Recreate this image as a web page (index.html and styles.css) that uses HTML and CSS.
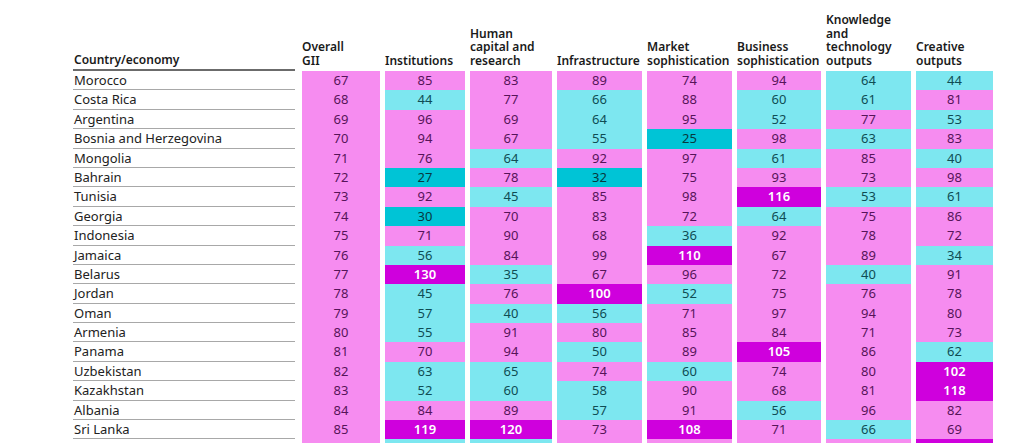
FILE: index.html
```html
<!DOCTYPE html>
<html lang="en">
<head>
<meta charset="utf-8">
<title>GII rankings by pillar</title>
<link rel="stylesheet" href="styles.css">
</head>
<body>
<div class="gii-table">
  <div class="head head-country">Country/economy</div>
  <div class="head">Overall<br>GII</div>
  <div class="head">Institutions</div>
  <div class="head">Human<br>capital and<br>research</div>
  <div class="head">Infrastructure</div>
  <div class="head">Market<br>sophistication</div>
  <div class="head">Business<br>sophistication</div>
  <div class="head">Knowledge<br>and<br>technology<br>outputs</div>
  <div class="head">Creative<br>outputs</div>

  <div class="country">Morocco</div>
  <div class="cell q3">67</div><div class="cell q3">85</div><div class="cell q3">83</div><div class="cell q3">89</div><div class="cell q3">74</div><div class="cell q3">94</div><div class="cell q2">64</div><div class="cell q2">44</div>

  <div class="country">Costa Rica</div>
  <div class="cell q3">68</div><div class="cell q2">44</div><div class="cell q3">77</div><div class="cell q2">66</div><div class="cell q3">88</div><div class="cell q2">60</div><div class="cell q2">61</div><div class="cell q3">81</div>

  <div class="country">Argentina</div>
  <div class="cell q3">69</div><div class="cell q3">96</div><div class="cell q3">69</div><div class="cell q2">64</div><div class="cell q3">95</div><div class="cell q2">52</div><div class="cell q3">77</div><div class="cell q2">53</div>

  <div class="country">Bosnia and Herzegovina</div>
  <div class="cell q3">70</div><div class="cell q3">94</div><div class="cell q3">67</div><div class="cell q2">55</div><div class="cell q1">25</div><div class="cell q3">98</div><div class="cell q2">63</div><div class="cell q3">83</div>

  <div class="country">Mongolia</div>
  <div class="cell q3">71</div><div class="cell q3">76</div><div class="cell q2">64</div><div class="cell q3">92</div><div class="cell q3">97</div><div class="cell q2">61</div><div class="cell q3">85</div><div class="cell q2">40</div>

  <div class="country">Bahrain</div>
  <div class="cell q3">72</div><div class="cell q1">27</div><div class="cell q3">78</div><div class="cell q1">32</div><div class="cell q3">75</div><div class="cell q3">93</div><div class="cell q3">73</div><div class="cell q3">98</div>

  <div class="country">Tunisia</div>
  <div class="cell q3">73</div><div class="cell q3">92</div><div class="cell q2">45</div><div class="cell q3">85</div><div class="cell q3">98</div><div class="cell q4">116</div><div class="cell q2">53</div><div class="cell q2">61</div>

  <div class="country">Georgia</div>
  <div class="cell q3">74</div><div class="cell q1">30</div><div class="cell q3">70</div><div class="cell q3">83</div><div class="cell q3">72</div><div class="cell q2">64</div><div class="cell q3">75</div><div class="cell q3">86</div>

  <div class="country">Indonesia</div>
  <div class="cell q3">75</div><div class="cell q3">71</div><div class="cell q3">90</div><div class="cell q3">68</div><div class="cell q2">36</div><div class="cell q3">92</div><div class="cell q3">78</div><div class="cell q3">72</div>

  <div class="country">Jamaica</div>
  <div class="cell q3">76</div><div class="cell q2">56</div><div class="cell q3">84</div><div class="cell q3">99</div><div class="cell q4">110</div><div class="cell q3">67</div><div class="cell q3">89</div><div class="cell q2">34</div>

  <div class="country">Belarus</div>
  <div class="cell q3">77</div><div class="cell q4">130</div><div class="cell q2">35</div><div class="cell q3">67</div><div class="cell q3">96</div><div class="cell q3">72</div><div class="cell q2">40</div><div class="cell q3">91</div>

  <div class="country">Jordan</div>
  <div class="cell q3">78</div><div class="cell q2">45</div><div class="cell q3">76</div><div class="cell q4">100</div><div class="cell q2">52</div><div class="cell q3">75</div><div class="cell q3">76</div><div class="cell q3">78</div>

  <div class="country">Oman</div>
  <div class="cell q3">79</div><div class="cell q2">57</div><div class="cell q2">40</div><div class="cell q2">56</div><div class="cell q3">71</div><div class="cell q3">97</div><div class="cell q3">94</div><div class="cell q3">80</div>

  <div class="country">Armenia</div>
  <div class="cell q3">80</div><div class="cell q2">55</div><div class="cell q3">91</div><div class="cell q3">80</div><div class="cell q3">85</div><div class="cell q3">84</div><div class="cell q3">71</div><div class="cell q3">73</div>

  <div class="country">Panama</div>
  <div class="cell q3">81</div><div class="cell q3">70</div><div class="cell q3">94</div><div class="cell q2">50</div><div class="cell q3">89</div><div class="cell q4">105</div><div class="cell q3">86</div><div class="cell q2">62</div>

  <div class="country">Uzbekistan</div>
  <div class="cell q3">82</div><div class="cell q2">63</div><div class="cell q2">65</div><div class="cell q3">74</div><div class="cell q2">60</div><div class="cell q3">74</div><div class="cell q3">80</div><div class="cell q4">102</div>

  <div class="country">Kazakhstan</div>
  <div class="cell q3">83</div><div class="cell q2">52</div><div class="cell q2">60</div><div class="cell q2">58</div><div class="cell q3">90</div><div class="cell q3">68</div><div class="cell q3">81</div><div class="cell q4">118</div>

  <div class="country">Albania</div>
  <div class="cell q3">84</div><div class="cell q3">84</div><div class="cell q3">89</div><div class="cell q2">57</div><div class="cell q3">91</div><div class="cell q2">56</div><div class="cell q3">96</div><div class="cell q3">82</div>

  <div class="country">Sri Lanka</div>
  <div class="cell q3">85</div><div class="cell q4">119</div><div class="cell q4">120</div><div class="cell q3">73</div><div class="cell q4">108</div><div class="cell q3">71</div><div class="cell q2">66</div><div class="cell q3">69</div>

  <div class="country country-cut"></div>
  <div class="cell q3"></div><div class="cell q2"></div><div class="cell q2"></div><div class="cell q3"></div><div class="cell q3"></div><div class="cell q3"></div><div class="cell q3"></div><div class="cell q4"></div>
</div>
</body>
</html>
```

FILE: styles.css
```css
html, body {
  margin: 0;
  padding: 0;
  background: #ffffff;
  overflow: hidden;
}

body {
  font-family: "Noto Sans", "Open Sans", "Liberation Sans", sans-serif;
  color: #1e1e1e;
}

.gii-table {
  display: grid;
  grid-template-columns: 224px 78px 80px 82px 85px 85px 84px 85px 77px;
  grid-template-rows: 71px;
  grid-auto-rows: 19.4px;
  column-gap: 5px;
  margin-left: 73px;
}

.head {
  align-self: end;
  font-size: 12px;
  font-weight: 600;
  line-height: 13.4px;
  white-space: nowrap;
  padding-bottom: 4px;
  color: #1a1a1a;
}

.head-country {
  margin-right: 2px;
  padding-left: 1px;
  padding-bottom: 3px;
  border-bottom: 2px solid #6b6b6b;
}

.country {
  margin-right: 2px;
  padding-left: 1px;
  font-size: 13px;
  line-height: 18.4px;
  border-bottom: 1px solid #a8a8a8;
  color: #222222;
  white-space: nowrap;
}

.country-cut {
  border-bottom: none;
}

.cell {
  text-align: center;
  font-size: 13px;
  line-height: 19.4px;
}

.q1 {
  background: #00c4d6;
  color: #07393f;
}

.q2 {
  background: #7de7f0;
  color: #0f4d54;
}

.q3 {
  background: #f68cf0;
  color: #561459;
}

.q4 {
  background: #cf00dd;
  color: #ffffff;
  font-weight: 600;
}
```
